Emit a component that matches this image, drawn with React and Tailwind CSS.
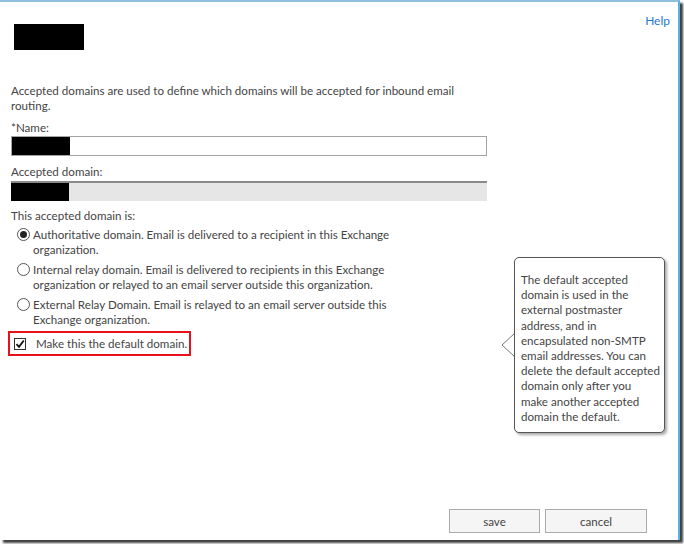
import React from 'react';

const radios = [
  { checked: true, lines: ['Authoritative domain. Email is delivered to a recipient in this Exchange', 'organization.'] },
  { checked: false, lines: ['Internal relay domain. Email is delivered to recipients in this Exchange', 'organization or relayed to an email server outside this organization.'] },
  { checked: false, lines: ['External Relay Domain. Email is relayed to an email server outside this', 'Exchange organization.'] },
];

const tipLines = [
  'The default accepted',
  'domain is used in the',
  'external postmaster',
  'address, and in',
  'encapsulated non-SMTP',
  'email addresses. You can',
  'delete the default accepted',
  'domain only after you',
  'make another accepted',
  'domain the default.',
];

function Radio({ checked }) {
  return (
    <span className="mt-[1px] flex h-[13px] w-[13px] shrink-0 items-center justify-center rounded-full border border-[#555] bg-white">
      {checked && <span className="h-[7px] w-[7px] rounded-full bg-[#222]" />}
    </span>
  );
}

export default function App() {
  return (
    <div className="h-[544px] w-[684px] bg-white font-['Lato','Open_Sans',sans-serif] text-[11.6px] leading-[15px] text-[#444]">
      <div className="relative flex h-[540px] w-[680px] flex-col border-r-2 border-t-2 border-r-[#55b2e2] border-t-[#8cc0de] shadow-[3px_3px_2px_rgba(0,0,0,0.75)]">
        {/* Header */}
        <div className="flex items-start justify-between pl-[14px] pr-[8px] pt-[22px]">
          <div className="h-[26px] w-[70px] bg-black" />
          <a className="mt-[-11px] text-[12px] text-[#1f7bcd]">Help</a>
        </div>

        {/* Form */}
        <div className="mt-[33px] whitespace-nowrap px-[11px]">
          <p>
            Accepted domains are used to define which domains will be accepted for inbound email
            <br />
            routing.
          </p>

          <div className="mt-[7px]">*Name:</div>
          <div className="mt-[1px] flex h-[20px] w-[476px] border border-[#a3a3a3] bg-white">
            <div className="w-[58px] bg-black" />
          </div>

          <div className="mt-[8px]">Accepted domain:</div>
          <div className="mt-[2px] flex h-[20px] w-[476px] border-t-2 border-[#8a8a8a] bg-[#e6e6e6]">
            <div className="w-[58px] bg-black" />
          </div>

          <div className="mt-[7px]">This accepted domain is:</div>
          <div className="ml-[6px] flex flex-col gap-[5px] pt-[4px]">
            {radios.map((r, i) => (
              <div key={i} className="flex gap-[3px]">
                <Radio checked={r.checked} />
                <div>
                  {r.lines[0]}
                  <br />
                  {r.lines[1]}
                </div>
              </div>
            ))}
          </div>

          <div className="ml-[-3px] mt-[4px] flex h-[25px] w-[183px] items-center gap-[10px] border-2 border-[#e8101a] pl-[4px]">
            <span className="flex h-[12px] w-[12px] items-center justify-center border border-[#333] bg-white">
              <svg width="10" height="10" viewBox="0 0 10 10">
                <path d="M1.5 5.2 L4 7.8 L8.8 1.5" fill="none" stroke="#111" strokeWidth="1.8" />
              </svg>
            </span>
            <span>Make this the default domain.</span>
          </div>
        </div>

        {/* Buttons */}
        <div className="mt-auto flex justify-end gap-[5px] pb-[7px] pr-[31px]">
          <button className="h-[24px] w-[91px] border border-[#ababab] bg-[#f5f5f5] text-[#444]">save</button>
          <button className="h-[24px] w-[102px] border border-[#ababab] bg-[#f5f5f5] text-[#444]">cancel</button>
        </div>

        {/* Tooltip */}
        <div className="absolute left-[501px] top-[255px] flex">
          <svg width="14" height="176" viewBox="0 0 14 176" className="mr-[-1px] shrink-0">
            <path d="M14 76 L1 88 L14 100" fill="white" stroke="#777" strokeWidth="1" />
          </svg>
          <div className="h-[176px] w-[151px] whitespace-nowrap rounded-[5px] border border-[#555] bg-white px-[6px] pt-[14px] leading-[15.2px] shadow-[2px_2px_3px_rgba(0,0,0,0.35)]">
            {tipLines.map((l) => (
              <div key={l}>{l}</div>
            ))}
          </div>
        </div>
      </div>
    </div>
  );
}
